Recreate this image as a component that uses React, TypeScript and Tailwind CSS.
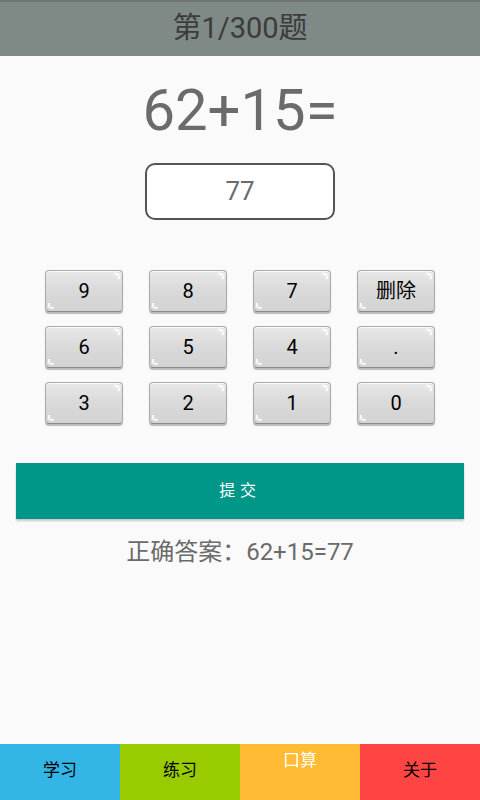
const keys = ["9", "8", "7", "删除", "6", "5", "4", ".", "3", "2", "1", "0"];

const tabs = [
  { label: "学习", bg: "bg-[#33b5e5]", text: "text-black pt-[14px]" },
  { label: "练习", bg: "bg-[#99cc00]", text: "text-black pt-[14px]" },
  { label: "口算", bg: "bg-[#ffbb33]", text: "text-white pt-[4px]" },
  { label: "关于", bg: "bg-[#ff4444]", text: "text-black pt-[14px]" },
];

function Key({ label }: { label: string }) {
  return (
    <button className="relative h-[42px] w-[78px] rounded-[4px] border border-[#a9a9a9] border-b-[#8a8a8a] bg-[linear-gradient(180deg,#e9e9e9_0%,#dadada_45%,#d3d3d3_100%)] text-[20px] text-black shadow-[0_2px_1px_rgba(0,0,0,0.25),inset_0_1px_0_rgba(255,255,255,0.8)]">
      <span className="absolute right-[2px] top-[2px] h-[6px] w-[6px] rounded-tr-[4px] border-r-2 border-t-2 border-white/80" />
      <span className="absolute bottom-[2px] left-[2px] h-[6px] w-[6px] rounded-bl-[4px] border-b-2 border-l-2 border-white/80" />
      {label}
    </button>
  );
}

export default function App() {
  return (
    <div className="flex h-[800px] w-[480px] flex-col bg-[#fafafa] font-['Roboto','Noto_Sans_CJK_SC',sans-serif]">
      <header className="flex h-[56px] items-center justify-center border-t-2 border-[#6f7874] bg-[#7f8985]">
        <h1 className="text-[29px] text-[#3c3c3c]">第1/300题</h1>
      </header>

      <main className="flex flex-1 flex-col items-center">
        <p className="mt-[17px] text-[58px] leading-[74px] text-[#6b6b6b]">62+15=</p>

        <div className="mt-[16px] flex h-[57px] w-[190px] items-center justify-center rounded-[10px] border-2 border-[#555] bg-white text-[26px] text-[#6b6b6b]">
          77
        </div>

        <div className="mt-[50px] grid grid-cols-4 gap-x-[26px] gap-y-[14px]">
          {keys.map((k) => (
            <Key key={k} label={k} />
          ))}
        </div>

        <button className="mt-[39px] h-[56px] w-[448px] bg-[#009688] text-[16px] tracking-[0.3em] text-white shadow-[0_2px_2px_rgba(0,0,0,0.2)]">
          提交
        </button>

        <p className="mt-[15px] text-[24px] text-[#6b6b6b]">正确答案：62+15=77</p>
      </main>

      <nav className="grid h-[56px] grid-cols-4">
        {tabs.map((t) => (
          <div key={t.label} className={`${t.bg} flex justify-center`}>
            <span className={`${t.text} text-[17px]`}>{t.label}</span>
          </div>
        ))}
      </nav>
    </div>
  );
}
